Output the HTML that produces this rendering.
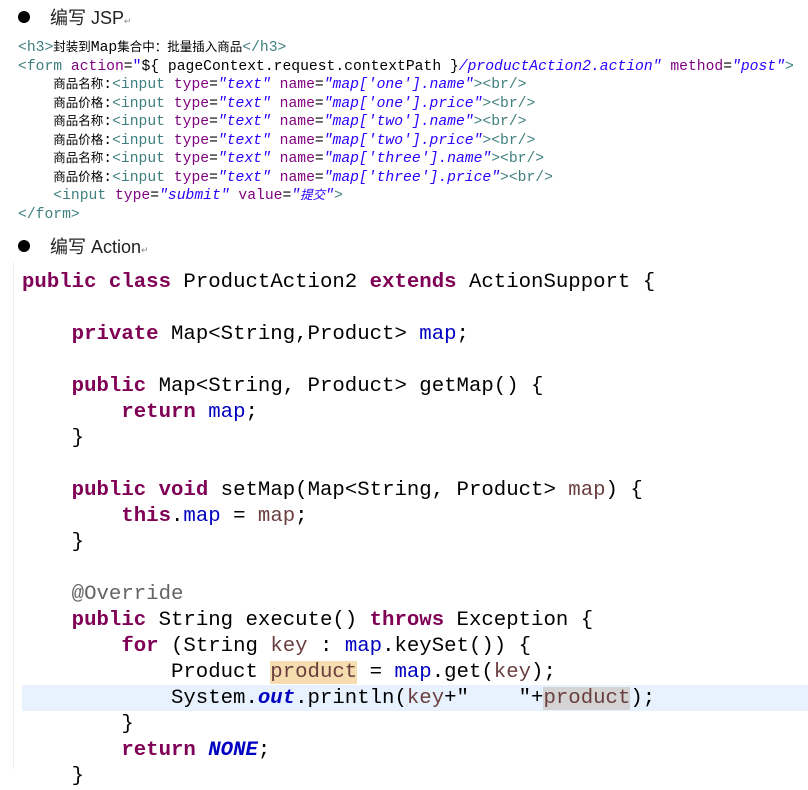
<!DOCTYPE html>
<html><head><meta charset="utf-8"><style>
body{margin:0;background:#fff;width:808px;height:769px;overflow:hidden;position:relative;font-family:"Liberation Sans","Noto Sans CJK SC",sans-serif}
.h{position:absolute;left:0;font-size:18px;color:#222}
.h .b{position:absolute;left:18px;top:5px;width:12px;height:12px;border-radius:50%;background:#000}
.h .t{position:absolute;left:50px;white-space:nowrap;top:-2px}
.ret{font-size:9px;color:#888}
.jsp{position:absolute;left:18px;top:39px;font-family:"Liberation Mono","Noto Sans CJK SC",monospace;font-size:14.7px;line-height:18.5px;white-space:pre;color:#000}
.tg{color:#3f7f7f}.at{color:#7f007f}.st{color:#2a00ff;font-style:italic}.cn{font-size:12.5px}
.java{position:absolute;left:22px;top:270px;font-family:"Liberation Mono",monospace;font-size:20.7px;line-height:26px;white-space:pre;color:#000}
.k{color:#7f0055;font-weight:bold}.f{color:#0000c0}.v{color:#6a3e3e}.an{color:#646464}.sf{color:#0000c0;font-style:italic;font-weight:bold}
.hl{position:absolute;left:22px;top:685px;width:786px;height:26px;background:#e8f2fe}
.gut{position:absolute;left:13px;top:262px;width:1px;height:507px;background:#eee}
.occ{background:#f6ddb0}.occ2{background:#d4d4d4}
</style></head><body>
<div class="h" style="top:6px"><span class="b"></span><span class="t">编写 JSP<span class="ret">↵</span></span></div>
<div class="jsp"><span class="tg">&lt;h3&gt;</span><span class="cn">封装到</span>Map<span class="cn">集合中：批量插入商品</span><span class="tg">&lt;/h3&gt;</span>
<span class="tg">&lt;form</span> <span class="at">action</span>=<span class="st" style="font-style:normal">"</span>${ pageContext.request.contextPath }<span class="st">/productAction2.action"</span> <span class="at">method</span>=<span class="st">"post"</span><span class="tg">&gt;</span>
    <span class="cn">商品名称</span>:<span class="tg">&lt;input</span> <span class="at">type</span>=<span class="st">"text"</span> <span class="at">name</span>=<span class="st">"map['one'].name"</span><span class="tg">&gt;&lt;br/&gt;</span>
    <span class="cn">商品价格</span>:<span class="tg">&lt;input</span> <span class="at">type</span>=<span class="st">"text"</span> <span class="at">name</span>=<span class="st">"map['one'].price"</span><span class="tg">&gt;&lt;br/&gt;</span>
    <span class="cn">商品名称</span>:<span class="tg">&lt;input</span> <span class="at">type</span>=<span class="st">"text"</span> <span class="at">name</span>=<span class="st">"map['two'].name"</span><span class="tg">&gt;&lt;br/&gt;</span>
    <span class="cn">商品价格</span>:<span class="tg">&lt;input</span> <span class="at">type</span>=<span class="st">"text"</span> <span class="at">name</span>=<span class="st">"map['two'].price"</span><span class="tg">&gt;&lt;br/&gt;</span>
    <span class="cn">商品名称</span>:<span class="tg">&lt;input</span> <span class="at">type</span>=<span class="st">"text"</span> <span class="at">name</span>=<span class="st">"map['three'].name"</span><span class="tg">&gt;&lt;br/&gt;</span>
    <span class="cn">商品价格</span>:<span class="tg">&lt;input</span> <span class="at">type</span>=<span class="st">"text"</span> <span class="at">name</span>=<span class="st">"map['three'].price"</span><span class="tg">&gt;&lt;br/&gt;</span>
    <span class="tg">&lt;input</span> <span class="at">type</span>=<span class="st">"submit"</span> <span class="at">value</span>=<span class="st">"<span class="cn">提交</span>"</span><span class="tg">&gt;</span>
<span class="tg">&lt;/form&gt;</span></div>
<div class="h" style="top:235px"><span class="b"></span><span class="t">编写 Action<span class="ret">↵</span></span></div>
<div class="gut"></div>
<div class="hl"></div>
<div class="java"><span class="k">public</span> <span class="k">class</span> ProductAction2 <span class="k">extends</span> ActionSupport {

    <span class="k">private</span> Map&lt;String,Product&gt; <span class="f">map</span>;

    <span class="k">public</span> Map&lt;String, Product&gt; getMap() {
        <span class="k">return</span> <span class="f">map</span>;
    }

    <span class="k">public</span> <span class="k">void</span> setMap(Map&lt;String, Product&gt; <span class="v">map</span>) {
        <span class="k">this</span>.<span class="f">map</span> = <span class="v">map</span>;
    }

    <span class="an">@Override</span>
    <span class="k">public</span> String execute() <span class="k">throws</span> Exception {
        <span class="k">for</span> (String <span class="v">key</span> : <span class="f">map</span>.keySet()) {
            Product <span class="v occ">product</span> = <span class="f">map</span>.get(<span class="v">key</span>);
            System.<span class="sf">out</span>.println(<span class="v">key</span>+"    "+<span class="v occ2">product</span>);
        }
        <span class="k">return</span> <span class="sf">NONE</span>;
    }</div>
</body></html>
